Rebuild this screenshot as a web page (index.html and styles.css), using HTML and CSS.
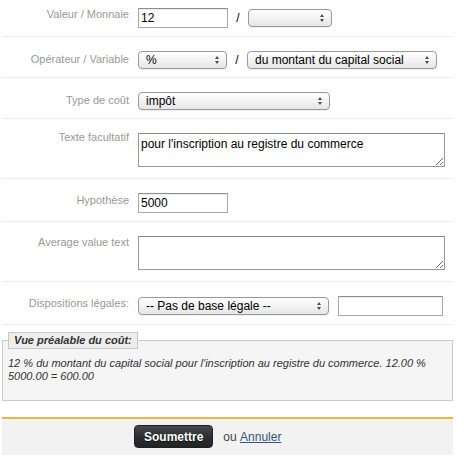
FILE: index.html
```html
<!DOCTYPE html>
<html lang="fr">
<head>
<meta charset="utf-8">
<title>Coût</title>
<link rel="stylesheet" href="styles.css">
</head>
<body>
<div class="page">
  <div class="row row-first">
    <label class="lbl lbl-0">Valeur / Monnaie</label>
    <div class="ctl">
      <input class="txt w90" type="text" value="12">
      <span class="slash">/</span>
      <span class="sel w84"><select><option></option></select></span>
    </div>
  </div>
  <div class="row">
    <label class="lbl">Opérateur / Variable</label>
    <div class="ctl">
      <span class="sel w89"><select><option>%</option></select></span>
      <span class="slash">/</span>
      <span class="sel w190"><select><option>du montant du capital social</option></select></span>
    </div>
  </div>
  <div class="row">
    <label class="lbl">Type de coût</label>
    <div class="ctl">
      <span class="sel w192"><select><option>impôt</option></select></span>
    </div>
  </div>
  <div class="row row-area">
    <label class="lbl lbl-up">Texte facultatif</label>
    <div class="ctl">
      <textarea class="area">pour l'inscription au registre du commerce</textarea>
    </div>
  </div>
  <div class="row">
    <label class="lbl lbl-1">Hypothèse</label>
    <div class="ctl">
      <input class="txt w90" type="text" value="5000">
    </div>
  </div>
  <div class="row row-area">
    <label class="lbl lbl-0">Average value text</label>
    <div class="ctl">
      <textarea class="area"></textarea>
    </div>
  </div>
  <div class="row">
    <label class="lbl lbl-1">Dispositions légales:</label>
    <div class="ctl ctl-wide">
      <span class="sel w191"><select><option>-- Pas de base légale --</option></select></span>
      <input class="txt w105" type="text" value="">
    </div>
  </div>

  <fieldset class="preview">
    <legend>Vue préalable du coût:</legend>
    <p>12 % du montant du capital social pour l'inscription au registre du commerce. 12.00 % 5000.00 = 600.00</p>
  </fieldset>

  <div class="actions">
    <button class="btn" type="button">Soumettre</button>
    <span class="ou">ou</span>&nbsp;<a class="link" href="#">Annuler</a>
  </div>
</div>
</body>
</html>
```
FILE: styles.css
```css
html, body {
  margin: 0;
  padding: 0;
  background: #ffffff;
}

body {
  font-family: "Liberation Sans", Arial, sans-serif;
  font-size: 12px;
  color: #000;
}

.page {
  width: 451px;
  margin-left: 2px;
}

.row {
  display: grid;
  grid-template-columns: 127px 1fr;
  column-gap: 9px;
  align-items: start;
  padding: 14px 0 8px;
  border-bottom: 1px solid #ececec;
}

.row-first {
  padding-top: 8px;
}

.row-area {
  padding-bottom: 11px;
}

.lbl {
  display: block;
  text-align: right;
  font-size: 11px;
  line-height: 13px;
  color: #999;
  padding-top: 2px;
}

.lbl-0 { padding-top: 0; }
.lbl-1 { padding-top: 1px; }
.lbl-up { padding-top: 0; margin-top: -2px; }

.ctl {
  display: flex;
  align-items: center;
  gap: 8px;
  min-height: 18px;
}

.ctl-wide {
  gap: 9px;
}

.slash {
  display: inline-block;
  width: 4px;
  text-align: center;
  font-size: 12px;
  color: #000;
}

.txt {
  box-sizing: border-box;
  height: 20px;
  margin: 0;
  padding: 0 2px;
  border: 1px solid #a8a8a8;
  border-top-color: #8e8e8e;
  box-shadow: inset 0 1px 1px rgba(0, 0, 0, 0.08);
  font-family: "Liberation Sans", Arial, sans-serif;
  font-size: 12px;
  color: #000;
  background: #fff;
  outline: none;
}

.w90 { width: 90px; }
.w105 { width: 105px; }

.sel {
  position: relative;
  display: inline-block;
  height: 18px;
}

.sel::before,
.sel::after {
  content: "";
  position: absolute;
  right: 8px;
  width: 0;
  height: 0;
  border-left: 2.5px solid transparent;
  border-right: 2.5px solid transparent;
  pointer-events: none;
}

.sel::before {
  top: 5px;
  border-bottom: 3px solid #4a4a4a;
}

.sel::after {
  top: 10px;
  border-top: 3px solid #4a4a4a;
}

.sel select {
  -webkit-appearance: none;
  appearance: none;
  box-sizing: border-box;
  display: block;
  width: 100%;
  height: 18px;
  margin: 0;
  padding: 0 16px 0 7px;
  border: 1px solid #999;
  border-radius: 4px;
  background: linear-gradient(#ffffff, #f3f3f3 50%, #e6e6e6);
  box-shadow: 0 1px 0 rgba(0, 0, 0, 0.06);
  font-family: "Liberation Sans", Arial, sans-serif;
  font-size: 12px;
  line-height: 16px;
  color: #000;
  outline: none;
}

.w84 { width: 84px; }
.w89 { width: 89px; }
.w190 { width: 190px; }
.w191 { width: 191px; }
.w192 { width: 192px; }

.area {
  box-sizing: border-box;
  display: block;
  width: 307px;
  height: 34px;
  margin: 0;
  padding: 3px 2px;
  border: 1px solid #999;
  border-top-color: #888;
  font-family: "Liberation Sans", Arial, sans-serif;
  font-size: 12px;
  line-height: 14px;
  color: #000;
  background: #fff;
  outline: none;
}

.preview {
  margin: 7px 0 0;
  padding: 8px 5px 17px;
  border: 1px solid #cbcbcb;
  background: #f5f5f5;
  min-inline-size: 0;
}

.preview legend {
  padding: 1px 5px;
  margin: 0;
  border: 1px solid #c8c8c8;
  background: #ededed;
  font-size: 11px;
  line-height: 13px;
  font-weight: bold;
  font-style: italic;
  color: #333;
}

.preview p {
  margin: 0;
  font-size: 11px;
  line-height: 13px;
  font-style: italic;
  color: #333;
}

.actions {
  display: flex;
  align-items: center;
  margin-top: 16px;
  border-top: 2px solid #f2b33d;
  background: #f2f2f2;
  padding: 6px 0 7px 132px;
  font-size: 12px;
}

.btn {
  box-sizing: border-box;
  height: 23px;
  margin: 0;
  padding: 0 9px;
  border: 1px solid #1e2022;
  border-radius: 4px;
  background: linear-gradient(#46494c, #2b2e30 55%, #222426);
  color: #fff;
  font-family: "Liberation Sans", Arial, sans-serif;
  font-size: 12px;
  font-weight: bold;
  text-shadow: 0 1px 1px rgba(0, 0, 0, 0.6);
  cursor: pointer;
}

.ou {
  margin-left: 10px;
  color: #444;
}

.link {
  color: #33557a;
  text-decoration: underline;
}
```
